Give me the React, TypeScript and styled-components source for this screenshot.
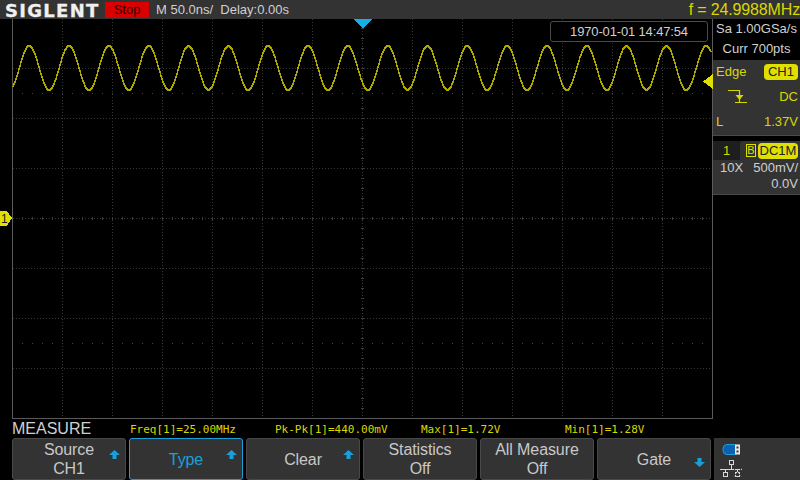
import React from "react";
import styled, { createGlobalStyle } from "styled-components";

const Global = createGlobalStyle`
  html, body { margin: 0; padding: 0; background: #000; }
  #root { width: 800px; height: 480px; overflow: hidden; }
`;

const Screen = styled.div`
  width: 800px;
  height: 480px;
  background: #000;
  display: flex;
  flex-direction: column;
  font-family: "Liberation Sans", Arial, sans-serif;
  color: #d0d0d0;
`;

const Header = styled.header`
  height: 19px;
  background: #333333;
  display: flex;
  align-items: center;
  flex: none;
`;

const Logo = styled.div`
  width: 105px;
  margin-top: 2px;
  padding-left: 5px;
  box-sizing: border-box;
  font-family: "DejaVu Sans", sans-serif;
  font-size: 18px;
  font-weight: 700;
  letter-spacing: 1.3px;
  -webkit-text-stroke: 0.3px #f0f0f0;
  color: #f0f0f0;
  line-height: 19px;
  white-space: nowrap;
`;

const StopBadge = styled.div`
  width: 44px;
  height: 16px;
  background: #d80000;
  color: #2a0000;
  font-size: 13px;
  line-height: 16px;
  text-align: center;
`;

const Timebase = styled.div`
  margin-left: 7px;
  font-size: 13px;
  color: #d0d0d0;
  white-space: pre;
`;

const Frequency = styled.div`
  margin-left: auto;
  font-size: 16px;
  letter-spacing: -0.15px;
  color: #d8d800;
  white-space: nowrap;
`;

const Middle = styled.div`
  display: flex;
  height: 400px;
  flex: none;
`;

const ScopeArea = styled.div`
  position: relative;
  width: 713px;
  height: 400px;
  flex: none;
`;

const Plot = styled.svg`
  display: block;
`;

const TimeStamp = styled.div`
  position: absolute;
  left: 550px;
  top: 2px;
  width: 158px;
  height: 21px;
  box-sizing: border-box;
  border: 1px solid #4a4a4a;
  border-radius: 3px;
  background: #000;
  font-size: 13px;
  letter-spacing: -0.15px;
  line-height: 19px;
  text-align: center;
  color: #d0d0d0;
`;

const Side = styled.aside`
  width: 87px;
  display: flex;
  flex-direction: column;
  font-size: 13px;
`;

const Acquire = styled.div`
  height: 40px;
  display: flex;
  flex-direction: column;
  align-items: center;
  color: #d0d0d0;
  line-height: 20px;
  white-space: nowrap;
`;

const TriggerPanel = styled.div`
  height: 76px;
  margin-top: 1px;
  box-sizing: border-box;
  background: #333333;
  border-bottom: 1px solid #4a4a4a;
  padding: 0 2px 0 3px;
  color: #d8d800;
  display: flex;
  flex-direction: column;
  gap: 2px;
`;

const PanelRow = styled.div`
  height: 23px;
  display: flex;
  align-items: center;
  justify-content: space-between;
`;

const TriggerIcon = styled.svg`
  margin-left: 12px;
`;

const ChannelChip = styled.span<{ $pad?: number }>`
  background: #e0e000;
  color: #222;
  border-radius: 4px;
  line-height: 16px;
  padding: 0 ${(p) => p.$pad ?? 4}px;
`;

const ChannelPanel = styled.div`
  height: 54px;
  margin-top: 5px;
  box-sizing: border-box;
  background: #333333;
  border-bottom: 1px solid #4a4a4a;
  color: #d0d0d0;
`;

const ChannelTabs = styled.div`
  height: 19px;
  display: flex;
  align-items: center;
  background: #1e1e1e;
`;

const ChannelNumber = styled.div`
  width: 27px;
  text-align: center;
  color: #d8d800;
`;

const ChannelFlags = styled.div`
  flex: 1;
  height: 19px;
  background: #333;
  border-radius: 4px 0 0 0;
  display: flex;
  align-items: center;
  gap: 2px;
  padding-left: 6px;
`;

const BwFlag = styled.span`
  width: 8px;
  height: 11px;
  border: 1px solid #e0e000;
  color: #e0e000;
  font-size: 11px;
  line-height: 11px;
  text-align: center;
`;

const ChannelLine = styled.div<{ $end?: boolean }>`
  height: 16px;
  line-height: 16px;
  padding: 0 2px 0 7px;
  display: flex;
  justify-content: ${(p) => (p.$end ? "flex-end" : "space-between")};
`;

const MeasureBar = styled.div`
  height: 19px;
  flex: none;
  box-sizing: border-box;
  display: grid;
  grid-template-columns: 118px 145px 146px 144px 1fr;
  padding: 1px 0 0 12px;
  align-items: center;
  font-family: "DejaVu Sans Mono", "Liberation Mono", monospace;
  font-size: 11px;
  color: #d8d800;
`;

const MeasureTitle = styled.div`
  font-family: "Liberation Sans", Arial, sans-serif;
  font-size: 16px;
  color: #d0d0d0;
`;

const KeyRow = styled.div`
  height: 42px;
  flex: none;
  display: flex;
  gap: 3px;
  padding-left: 12px;
`;

const SoftKey = styled.div<{ $active?: boolean }>`
  position: relative;
  flex: none;
  width: 114px;
  height: 42px;
  box-sizing: border-box;
  background: #333333;
  border: 1px solid ${(p) => (p.$active ? "#18a0d8" : "#484848")};
  border-radius: 3px;
  color: ${(p) => (p.$active ? "#18a0d8" : "#c8c8c8")};
  display: flex;
  flex-direction: column;
  align-items: center;
  justify-content: center;
  font-size: 16px;
  letter-spacing: -0.1px;
  line-height: 19px;
`;

const KeyArrow = styled.svg<{ $down?: boolean }>`
  position: absolute;
  right: 5px;
  top: ${(p) => (p.$down ? "19px" : "11px")};
`;

const Status = styled.div`
  flex: none;
  width: 86px;
  background: #333333;
  height: 42px;
`;

const Arrow = ({ down }: { down?: boolean }) => (
  <KeyArrow $down={down} width="11" height="9" viewBox="0 0 11 9">
    {down ? (
      <path d="M3.5 0h4v4H11L5.5 9 0 4h3.5z" fill="#18a0d8" />
    ) : (
      <path d="M5.5 0L11 5H7.5v4h-4V5H0z" fill="#18a0d8" />
    )}
  </KeyArrow>
);

const wave = () => {
  let d = "";
  for (let x = 13; x <= 711; x++) {
    const y = Math.round(49 - 22 * Math.cos(((x - 29.3) / 39.82) * 2 * Math.PI));
    d += `${d ? "L" : "M"}${x} ${y}`;
  }
  return d;
};

const vLines = Array.from({ length: 13 }, (_, i) => 62 + i * 50);
const hLines = [49, 99, 149, 199, 249, 299, 349];

const Grid = () => {
  const ticks: React.ReactNode[] = [];
  for (let x = 22; x < 712; x += 10) {
    ticks.push(<rect key={`a${x}`} x={x} y={198} width={1} height={3} fill="#3c3c3c" />);
    ticks.push(<rect key={`b${x}`} x={x} y={74} width={1} height={1} fill="#444444" />);
    ticks.push(<rect key={`c${x}`} x={x} y={324} width={1} height={1} fill="#444444" />);
  }
  for (let y = 9; y < 399; y += 10) {
    ticks.push(<rect key={`d${y}`} x={361} y={y} width={3} height={1} fill="#3c3c3c" />);
  }
  return (
    <Plot width="713" height="400" viewBox="0 0 713 400" shapeRendering="crispEdges">
      {vLines.map((x) => (
        <line key={x} x1={x + 0.5} y1="0" x2={x + 0.5} y2="399" stroke="#363636" strokeDasharray="1 2" />
      ))}
      {hLines.map((y) => (
        <line key={y} x1="13" y1={y + 0.5} x2="712" y2={y + 0.5} stroke="#363636" strokeDasharray="1 2" />
      ))}
      {ticks}
      <path d="M12.5 0V399.5H712.5V0" fill="none" stroke="#5a5a5a" />
      <path d={wave()} fill="none" stroke="#aca800" strokeWidth="1.5" />
      <path d="M353 0h19l-9.5 9.5z" fill="#12b0e4" />
      <path d="M713 55v15l-10-7.5z" fill="#e0e000" />
      <path d="M0 192h7l5 7-5 7.5H0z" fill="#e0e000" />
      <text x="1" y="203.5" fontSize="12" fill="#222" fontFamily="Liberation Sans" shapeRendering="auto">1</text>
    </Plot>
  );
};

const App = () => (
  <Screen>
    <Global />
    <Header>
      <Logo>SIGLENT</Logo>
      <StopBadge>Stop</StopBadge>
      <Timebase>{"M 50.0ns/  Delay:0.00s"}</Timebase>
      <Frequency>f = 24.9988MHz</Frequency>
    </Header>
    <Middle>
      <ScopeArea>
        <Grid />
        <TimeStamp>1970-01-01 14:47:54</TimeStamp>
      </ScopeArea>
      <Side>
        <Acquire>
          <span>Sa 1.00GSa/s</span>
          <span>Curr 700pts</span>
        </Acquire>
        <TriggerPanel>
          <PanelRow>
            <span>Edge</span>
            <ChannelChip>CH1</ChannelChip>
          </PanelRow>
          <PanelRow>
            <TriggerIcon width="19" height="15" viewBox="0 0 19 15">
              <path d="M0 1.5h11.5v12M7 13.5h12" fill="none" stroke="#d8d800" strokeWidth="1.2" />
              <path d="M7.5 6h8l-4 5z" fill="#d8d800" />
            </TriggerIcon>
            <span>DC</span>
          </PanelRow>
          <PanelRow>
            <span>L</span>
            <span>1.37V</span>
          </PanelRow>
        </TriggerPanel>
        <ChannelPanel>
          <ChannelTabs>
            <ChannelNumber>1</ChannelNumber>
            <ChannelFlags>
              <BwFlag>B</BwFlag>
              <ChannelChip $pad={1.5}>DC1M</ChannelChip>
            </ChannelFlags>
          </ChannelTabs>
          <ChannelLine>
            <span>10X</span>
            <span>500mV/</span>
          </ChannelLine>
          <ChannelLine $end>
            <span>0.0V</span>
          </ChannelLine>
        </ChannelPanel>
      </Side>
    </Middle>
    <MeasureBar>
      <MeasureTitle>MEASURE</MeasureTitle>
      <span>Freq[1]=25.00MHz</span>
      <span>Pk-Pk[1]=440.00mV</span>
      <span>Max[1]=1.72V</span>
      <span>Min[1]=1.28V</span>
    </MeasureBar>
    <KeyRow>
      <SoftKey>
        <span>Source</span>
        <span>CH1</span>
        <Arrow />
      </SoftKey>
      <SoftKey $active>
        <span>Type</span>
        <Arrow />
      </SoftKey>
      <SoftKey>
        <span>Clear</span>
        <Arrow />
      </SoftKey>
      <SoftKey>
        <span>Statistics</span>
        <span>Off</span>
      </SoftKey>
      <SoftKey>
        <span>All Measure</span>
        <span>Off</span>
      </SoftKey>
      <SoftKey>
        <span>Gate</span>
        <Arrow down />
      </SoftKey>
      <Status>
        <svg width="86" height="42" viewBox="0 0 86 42">
          <rect x="9" y="6.5" width="15" height="10" rx="4" fill="#0c62b0" stroke="#18a0d8" />
          <rect x="21" y="6.5" width="5" height="10" fill="#e8e8e8" />
          <rect x="22.5" y="8.5" width="2" height="2" fill="#333" />
          <rect x="22.5" y="12.5" width="2" height="2" fill="#333" />
          <rect x="15.5" y="22.5" width="4" height="4" fill="none" stroke="#d8d8d8" />
          <rect x="9.5" y="34.5" width="4" height="4" fill="none" stroke="#d8d8d8" />
          <rect x="21.5" y="34.5" width="4" height="4" fill="none" stroke="#d8d8d8" />
          <path d="M17.5 27v4M6 31.5h22M11.5 31.5v3M23.5 31.5v3" fill="none" stroke="#d8d8d8" />
          <path d="M19 30l9 9M28 30l-9 9" stroke="#e01010" />
        </svg>
      </Status>
    </KeyRow>
  </Screen>
);

export default App;
